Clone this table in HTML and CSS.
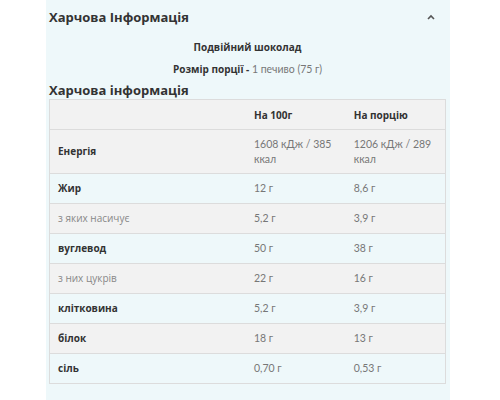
FILE: index.html
```html
<!DOCTYPE html>
<html lang="uk">
<head>
  <meta charset="UTF-8" />
  <title>Харчова Інформація</title>
  <link rel="stylesheet" href="styles.css">
</head>
<body>

  <section class="panel">
    <div class="panel-head">
      <h2>Харчова Інформація</h2>
      <svg class="chevron" width="10" height="8" viewBox="0 0 10 8">
        <path d="M2 6 L5 3 L8 6" fill="none" stroke="#555" stroke-width="1.6" />
      </svg>
    </div>

    <p class="product-name">Подвійний шоколад</p>
    <p class="portion"><strong>Розмір порції -</strong> <span>1 печиво (75 г)</span></p>

    <h3>Харчова інформація</h3>

    <table class="nutri">
      <thead>
        <tr>
          <th></th>
          <th>На 100г</th>
          <th>На порцію</th>
        </tr>
      </thead>
      <tbody>
        <tr>
          <td class="label">Енергія</td>
          <td>1608 кДж / 385 ккал</td>
          <td>1206 кДж / 289 ккал</td>
        </tr>
        <tr>
          <td class="label">Жир</td>
          <td>12 г</td>
          <td>8,6 г</td>
        </tr>
        <tr>
          <td class="sub">з яких насичує</td>
          <td>5,2 г</td>
          <td>3,9 г</td>
        </tr>
        <tr>
          <td class="label">вуглевод</td>
          <td>50 г</td>
          <td>38 г</td>
        </tr>
        <tr>
          <td class="sub">з них цукрів</td>
          <td>22 г</td>
          <td>16 г</td>
        </tr>
        <tr>
          <td class="label">клітковина</td>
          <td>5,2 г</td>
          <td>3,9 г</td>
        </tr>
        <tr>
          <td class="label">білок</td>
          <td>18 г</td>
          <td>13 г</td>
        </tr>
        <tr>
          <td class="label">сіль</td>
          <td>0,70 г</td>
          <td>0,53 г</td>
        </tr>
      </tbody>
    </table>
  </section>

</body>
</html>
```

FILE: styles.css
```css
body {
  margin: 0;
  background: #fff;
  font-family: "Open Sans", Arial, sans-serif;
  color: #333;
}

.panel {
  margin-left: 46px;
  width: 404px;
  height: 400px;
  box-sizing: border-box;
  padding: 7px 4px 0 3px;
  background: #eef8fa;
  overflow: hidden;
}

.panel-head {
  display: flex;
  justify-content: space-between;
  align-items: center;
  padding-right: 10px;
}

h2, h3 {
  margin: 0;
  font-size: 13px;
  font-weight: 700;
  line-height: 20px;
  color: #333;
}

.product-name {
  margin: 13px 0 0;
  text-align: center;
  font-size: 10px;
  font-weight: 700;
  line-height: 15px;
}

.portion {
  margin: 7px 0 0;
  text-align: center;
  font-size: 10px;
  line-height: 15px;
}

.portion span {
  font-family: Lato, Arial, sans-serif;
  color: #777;
  font-size: 10.5px;
}

h3 {
  margin-top: 4px;
  line-height: 18px;
}

.nutri {
  width: 397px;
  border-collapse: collapse;
  border: 1px solid #dcdcdc;
  font-size: 10px;
  table-layout: fixed;
}

.nutri th {
  text-align: left;
  font-weight: 700;
  height: 29px;
  padding: 0 8px;
  background: #f2f2f2;
}

.nutri th:first-child { width: 180px; }

.nutri td {
  height: 29px;
  padding: 0 8px;
  border-top: 1px solid #dcdcdc;
  font-family: Lato, Arial, sans-serif;
  font-size: 10.5px;
  color: #777;
  line-height: 15px;
}

.nutri tbody tr:nth-child(odd) {
  background: #f2f2f2;
}

.nutri tbody tr:first-child td {
  height: 43px;
}

.nutri td.label,
.nutri td.sub {
  font-family: "Open Sans", Arial, sans-serif;
  font-size: 10px;
}

.nutri td.label {
  font-weight: 700;
  color: #333;
}

.nutri td.sub {
  color: #888;
}
```
